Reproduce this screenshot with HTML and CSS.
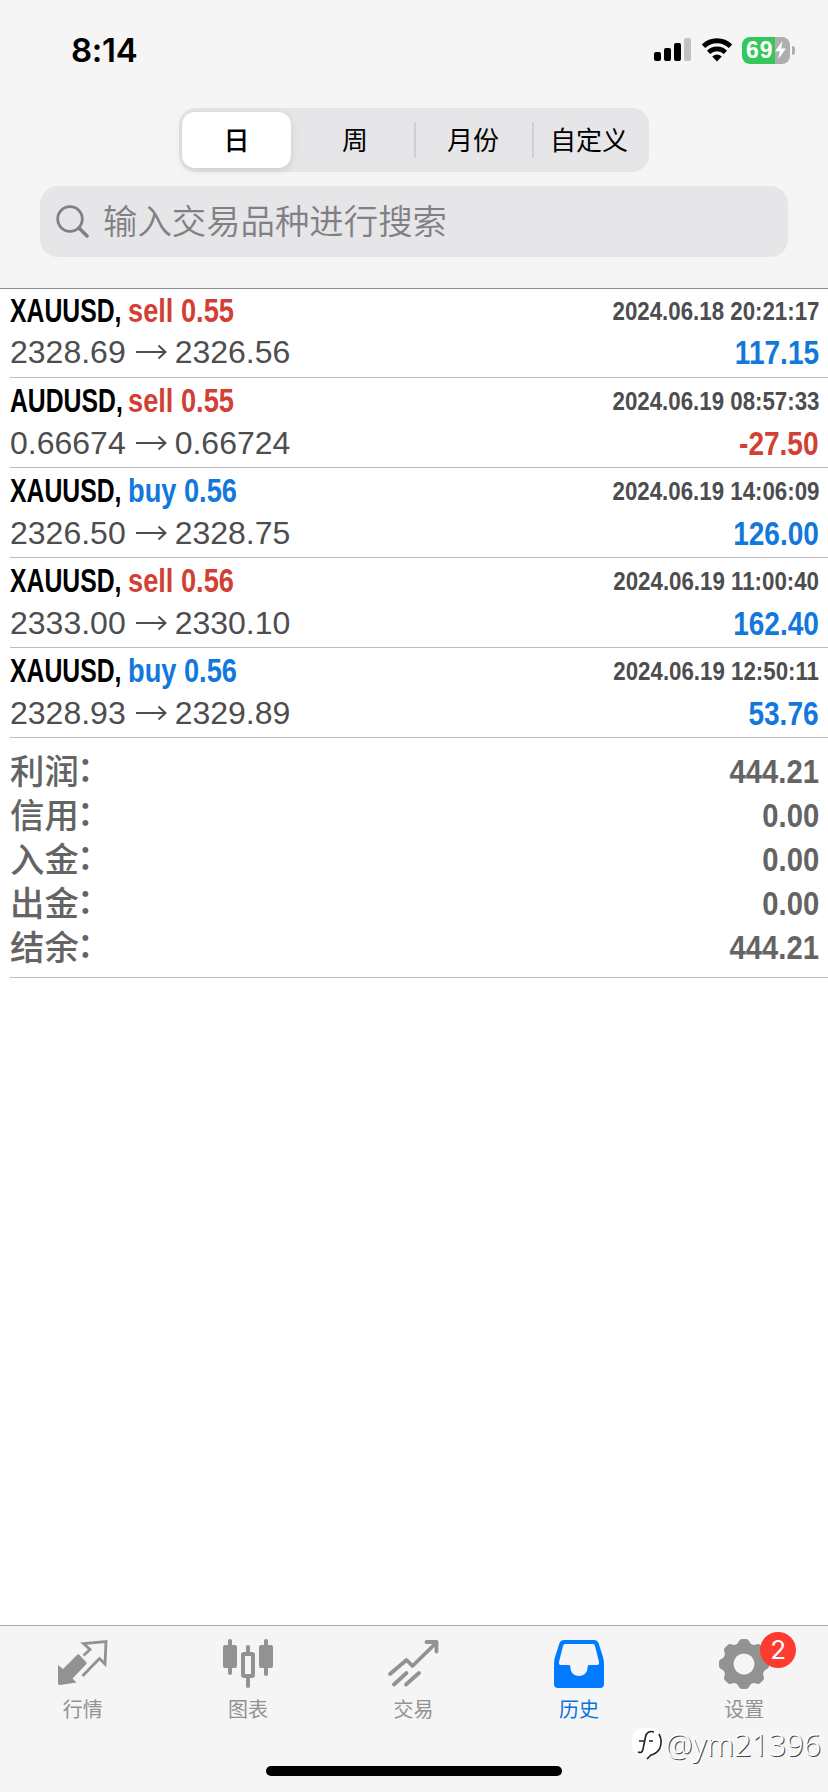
FILE: index.html
```
<!DOCTYPE html>
<html lang="zh-CN">
<head>
<meta charset="utf-8">
<title>历史</title>
<link rel="stylesheet" href="styles.css">
</head>
<body>
<div class="screen">
  <header class="header">
    <div class="status">
      <span class="time">8:14</span>
      <div class="status-icons">
        <svg width="38" height="24" viewBox="0 0 38 24"><rect x="0" y="14" width="7" height="9" rx="2"/><rect x="10" y="10" width="7" height="13" rx="2"/><rect x="20" y="5" width="7" height="18" rx="2"/><rect x="30" y="0" width="7" height="23" rx="2" fill="#c1c1c1"/></svg>
        <svg width="32" height="24" viewBox="0 0 32 24"><path d="M2.500 8.300A19.500 19.500 0 0 1 29.500 8.300" fill="none" stroke="#000" stroke-width="5"/><path d="M7.600 14.300A12 12 0 0 1 24.400 14.300" fill="none" stroke="#000" stroke-width="4.600"/><path d="M11.200 18.600Q16 14.600 20.800 18.600L16 23.500Z"/></svg>
        <div class="battery"><span class="level">69</span><svg class="bolt" width="11" height="18" viewBox="0 0 11 18"><path d="M7.500 0L0 10.200H4.700L3.300 18L11 7.500H6.200Z" fill="#fff"/></svg></div>
        <span class="battery-tip"></span>
      </div>
    </div>
    <div class="segments">
      <span class="segment active">日</span>
      <span class="segment">周</span>
      <span class="segment divided">月份</span>
      <span class="segment divided">自定义</span>
    </div>
    <div class="search">
      <svg width="34" height="34" viewBox="0 0 34 34" fill="none" stroke="#808084" stroke-linecap="round"><circle cx="14" cy="14" r="12.300" stroke-width="2.800"/><path d="M23 23L31 31" stroke-width="3.600"/></svg>
      <span>输入交易品种进行搜索</span>
    </div>
  </header>

  <main class="content">
    <article class="deal">
      <div class="line"><div class="title"><span class="symbol">XAUUSD,</span><span class="side red">sell 0.55</span></div><time class="date">2024.06.18 20:21:17</time></div>
      <div class="line second"><div class="prices"><span>2328.69</span><svg class="arrow" viewBox="0 0 31 16"><path d="M0 8H29M22.500 1.500L29.500 8L22.500 14.500"/></svg><span>2326.56</span></div><span class="profit blue">117.15</span></div>
    </article>
    <article class="deal">
      <div class="line"><div class="title"><span class="symbol">AUDUSD,</span><span class="side red">sell 0.55</span></div><time class="date">2024.06.19 08:57:33</time></div>
      <div class="line second"><div class="prices"><span>0.66674</span><svg class="arrow" viewBox="0 0 31 16"><path d="M0 8H29M22.500 1.500L29.500 8L22.500 14.500"/></svg><span>0.66724</span></div><span class="profit red">-27.50</span></div>
    </article>
    <article class="deal">
      <div class="line"><div class="title"><span class="symbol">XAUUSD,</span><span class="side blue">buy 0.56</span></div><time class="date">2024.06.19 14:06:09</time></div>
      <div class="line second"><div class="prices"><span>2326.50</span><svg class="arrow" viewBox="0 0 31 16"><path d="M0 8H29M22.500 1.500L29.500 8L22.500 14.500"/></svg><span>2328.75</span></div><span class="profit blue">126.00</span></div>
    </article>
    <article class="deal">
      <div class="line"><div class="title"><span class="symbol">XAUUSD,</span><span class="side red">sell 0.56</span></div><time class="date">2024.06.19 11:00:40</time></div>
      <div class="line second"><div class="prices"><span>2333.00</span><svg class="arrow" viewBox="0 0 31 16"><path d="M0 8H29M22.500 1.500L29.500 8L22.500 14.500"/></svg><span>2330.10</span></div><span class="profit blue">162.40</span></div>
    </article>
    <article class="deal">
      <div class="line"><div class="title"><span class="symbol">XAUUSD,</span><span class="side blue">buy 0.56</span></div><time class="date">2024.06.19 12:50:11</time></div>
      <div class="line second"><div class="prices"><span>2328.93</span><svg class="arrow" viewBox="0 0 31 16"><path d="M0 8H29M22.500 1.500L29.500 8L22.500 14.500"/></svg><span>2329.89</span></div><span class="profit blue">53.76</span></div>
    </article>
    <section class="summary">
      <div class="total"><span class="label">利润<span class="colon">：</span></span><span class="amount">444.21</span></div>
      <div class="total"><span class="label">信用<span class="colon">：</span></span><span class="amount">0.00</span></div>
      <div class="total"><span class="label">入金<span class="colon">：</span></span><span class="amount">0.00</span></div>
      <div class="total"><span class="label">出金<span class="colon">：</span></span><span class="amount">0.00</span></div>
      <div class="total"><span class="label">结余<span class="colon">：</span></span><span class="amount">444.21</span></div>
    </section>
  </main>

  <footer class="footer">
    <nav class="tabs">
      <div class="tab"><svg width="52" height="52" viewBox="0 0 52 52"><path d="M1 21L6 25L20.500 10.500Q21.500 10 22.500 11L29.500 18.500Q30 19.500 29 20.500L15.500 34.500L19.500 38.500L3 41Q1 41 1 39Z" transform="translate(0 4)" fill="#929292"/><path d="M26.500 15.500L33 9.500L26.500 3.500L49 1.500L48 24L42.500 18.500L25.500 36" fill="none" stroke="#929292" stroke-width="2.800"/></svg><span>行情</span></div>
      <div class="tab"><svg width="52" height="52" viewBox="0 0 52 52" fill="#929292"><rect x="6" y="-1" width="4" height="36" rx="2"/><rect x="1" y="5" width="14" height="23" rx="2"/><rect x="42" y="-1" width="4" height="37" rx="2"/><rect x="37" y="5" width="14" height="23" rx="2"/><rect x="24" y="5" width="4" height="43" rx="2"/><rect x="21" y="14" width="10" height="22" rx="1" fill="#f5f5f5" stroke="#929292" stroke-width="4"/></svg><span>图表</span></div>
      <div class="tab"><svg width="52" height="52" viewBox="0 0 52 52" fill="none" stroke="#929292" stroke-width="3.800" stroke-linecap="round" stroke-linejoin="round"><path d="M3 34L19.500 20L25.500 26L49 3M39.500 2H49.500V11.500M7 44.500L19.500 33M19 44.500L32 33"/></svg><span>交易</span></div>
      <div class="tab current"><svg width="52" height="52" viewBox="0 0 52 52"><path fill-rule="evenodd" fill="#007aff" d="M11 0H41Q44 0 45.500 3L50 17Q51 20 51 24V44Q51 48 47 48H5Q1 48 1 44V24Q1 20 2 17L6.500 3Q8 0 11 0ZM12 4Q10.500 4 10 6L6 22Q5.500 25 8 25H16Q17.500 25 17.500 27.500C17.500 32 20.500 36 26 36S34.500 32 34.500 27.500Q34.500 25 36 25H44Q46.500 25 46 22L42 6Q41.500 4 40 4Z"/></svg><span>历史</span></div>
      <div class="tab"><div class="gear"><svg width="52" height="52" viewBox="-26 -24 52 52"><g fill="#929292"><circle r="20.500"/><g id="pair"><path d="M-9 -19Q-6 -20 -5 -23Q-4 -25 -2 -25H2Q4 -25 5 -23Q6 -20 9 -19V19Q6 20 5 23Q4 25 2 25H-2Q-4 25 -5 23Q-6 20 -9 19Z"/></g><use href="#pair" transform="rotate(45)"/><use href="#pair" transform="rotate(90)"/><use href="#pair" transform="rotate(135)"/></g><circle r="10.500" fill="#f5f5f5"/></svg><span class="badge">2</span></div><span>设置</span></div>
    </nav>
    <div class="home-bar"></div>
    <div class="watermark"><svg width="32" height="34" viewBox="0 0 32 34"><rect x="0" y="1" width="29" height="28" rx="11" fill="#fff"/><path d="M22 5Q15 3 13.500 10L11 22Q10 27 6 25M7 14H13M17 14H21M27 7Q31 14 27.500 22Q24 27 19 28L15 32" fill="none" stroke="#222" stroke-width="1.600"/></svg><span>@ym21396</span></div>
  </footer>
</div>
</body>
</html>
```
FILE: styles.css
```
* { box-sizing: border-box; }
body { margin: 0; background: #fff; font-family: "Liberation Sans", "Noto Sans CJK SC", sans-serif; }
svg { display: block; flex: none; overflow: visible; }
.screen { width: 828px; height: 1792px; display: flex; flex-direction: column; overflow: hidden; }

.header { height: 289px; flex: none; background: #f5f5f5; border-bottom: 1px solid #8c8c8e; display: flex; flex-direction: column; align-items: center; }
.status { width: 100%; height: 108px; padding: 0 33px 8px 71px; display: flex; justify-content: space-between; align-items: center; }
.time { font: 600 33px/40px Inter, sans-serif; letter-spacing: -0.3px; }
.status-icons { display: flex; align-items: center; }
.status-icons > svg + svg { margin-left: 9px; }
.battery { margin-left: 9px; width: 48px; height: 27px; border-radius: 8px; background: linear-gradient(90deg, #34c759 33px, #aeaeb0 33px); display: flex; align-items: center; padding-left: 4px; }
.level { font: 700 23px/27px "Liberation Sans", sans-serif; color: #fff; width: 29px; letter-spacing: 1px; }
.battery-tip { width: 3px; height: 9px; margin-left: 2px; border-radius: 0 4px 4px 0; background: #aeaeb0; }

.segments { width: 470px; height: 64px; padding: 4px 3px; border-radius: 17px; background: #e6e6e8; display: grid; grid-template-columns: 114px 118px 118px 1fr; }
.segment { display: flex; align-items: center; justify-content: center; position: relative; font: 400 26px/54px "Noto Sans CJK SC", sans-serif; color: #000; padding-bottom: 2px; }
.segment.active { margin-right: 5px; background: #fff; border-radius: 13px; font-weight: 500; box-shadow: 0 2px 8px rgba(0,0,0,.12); }
.segment.divided::before { content: ""; position: absolute; left: 0; top: 10px; width: 2px; height: 36px; background: #d0d0d3; }

.search { width: 748px; height: 71px; margin-top: 14px; padding-left: 16px; border-radius: 18px; background: #e6e6e8; display: flex; align-items: center; gap: 13px; font: 350 34.4px/67px "Noto Sans CJK SC", sans-serif; color: #808084; }
.search span { padding-bottom: 4px; }

.content { flex: 1; }
.deal { height: 90px; margin-left: 10px; padding-right: 9px; border-bottom: 1px solid #bdbdbf; display: flex; flex-direction: column; }
.deal:first-child { height: 89px; }
.deal:first-child .line:first-child { height: 44px; }
.line { height: 46px; flex: none; display: flex; justify-content: space-between; align-items: center; }
.line.second { height: 38px; }
.title { display: flex; font: 700 33px/40px "Liberation Sans", sans-serif; }
.symbol { width: 118px; white-space: nowrap; transform: scaleX(.75); transform-origin: left; }
.side { white-space: nowrap; transform: scaleX(.825); transform-origin: left; }
.date { font: 700 26px/36px "Liberation Sans", sans-serif; color: #4d4d4f; transform: scaleX(.857); transform-origin: right; }
.prices { display: flex; align-items: center; font: 400 32px/36px "Liberation Sans", sans-serif; color: #4d4d4f; }
.arrow { width: 31px; height: 16px; margin: 0 8px 0 10px; fill: none; stroke: #4d4d4f; stroke-width: 2; }
.profit { font: 700 33px/36px "Liberation Sans", sans-serif; transform: translateY(1px) scaleX(.85); transform-origin: right; }
.red { color: #d23f35; }
.blue { color: #1278dc; }

.summary { height: 240px; margin-left: 10px; padding: 11px 9px 0 0; border-bottom: 1px solid #bdbdbf; color: #646464; }
.total { height: 44px; display: flex; justify-content: space-between; align-items: center; }
.label { font: 500 34.4px/42px "Liberation Sans", "Noto Sans CJK SC", sans-serif; padding-top: 2px; }
.colon { position: relative; left: -2px; top: -3px; }
.amount { font: 700 34px/44px "Liberation Sans", sans-serif; transform: scaleX(.86); transform-origin: right; }

.footer { height: 167px; flex: none; background: #f5f5f5; border-top: 1px solid #acacae; position: relative; }
.tabs { display: grid; grid-template-columns: repeat(5, 1fr); padding: 14px 1px 0 0; }
.tab { display: flex; flex-direction: column; align-items: center; gap: 2px; font: 400 20px/30px "Noto Sans CJK SC", sans-serif; color: #929292; }
.tab.current { color: #0a72dc; }
.gear { position: relative; }
.badge { position: absolute; left: 42px; top: -8px; width: 36px; height: 36px; border-radius: 50%; background: #ff3b30; color: #fff; font: 400 26px/36px Inter, sans-serif; text-align: center; }
.home-bar { position: absolute; left: 266px; bottom: 16px; width: 296px; height: 10px; border-radius: 5px; background: #000; }
.watermark { position: absolute; right: 7px; bottom: 28px; display: flex; align-items: center; gap: 1px; font: 300 30.5px/40px "Noto Sans", sans-serif; color: #fff; text-shadow: 1px 1px 0 #444; }
```
